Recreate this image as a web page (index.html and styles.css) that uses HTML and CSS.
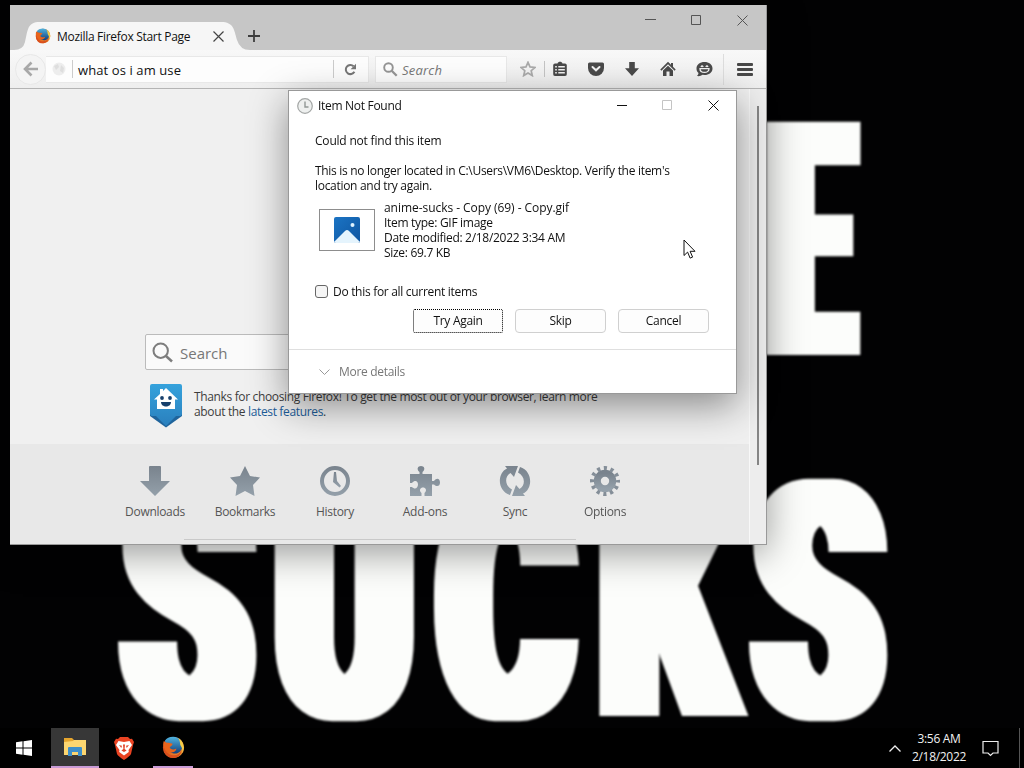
FILE: index.html
```html
<!DOCTYPE html>
<html lang="en">
<head>
    <meta charset="UTF-8">
    <meta name="viewport" content="width=device-width, initial-scale=1.0">
    <title>Desktop</title>
    <link rel="stylesheet" href="styles.css">
</head>
<body>
    <!-- Shared icons -->
    <svg class="defs" width="0" height="0">
        <defs>
            <linearGradient id="fox" x1="0" y1="0" x2="1" y2="1">
                <stop offset="0" stop-color="#d8401c"/>
                <stop offset=".5" stop-color="#e8641c"/>
                <stop offset="1" stop-color="#e9a03a"/>
            </linearGradient>
            <linearGradient id="globe" x1="0" y1="0" x2="0" y2="1">
                <stop offset="0" stop-color="#4fb3df"/>
                <stop offset="1" stop-color="#123f7c"/>
            </linearGradient>
            <linearGradient id="pin" x1="0" y1="0" x2="0" y2="1">
                <stop offset="0" stop-color="#35a2dc"/>
                <stop offset="1" stop-color="#2a7fbd"/>
            </linearGradient>
            <linearGradient id="photo" x1="0" y1="0" x2="1" y2="1">
                <stop offset="0" stop-color="#1b74c4"/>
                <stop offset="1" stop-color="#0f55a0"/>
            </linearGradient>
            <linearGradient id="steel" x1="0" y1="0" x2="0" y2="1">
                <stop offset="0" stop-color="#79838d"/>
                <stop offset="1" stop-color="#94a0aa"/>
            </linearGradient>
            <symbol id="firefox" viewBox="0 0 24 24">
                <circle cx="12" cy="12" r="11" fill="url(#fox)"/>
                <path d="M3 5C6 0 16-1 20 5c3 5 1 11-4 13-4 1-9-1-10-5z" fill="url(#globe)"/>
                <path d="M17 2c5 3 8 10 4 16 1-5-1-7-2-9 0-3-1-5-2-7z" fill="#f5cc48"/>
                <path d="M2 5c1 2 3 2 5 2l4 1c0 2-2 2-3 4 2 3 5 2 7 1 0 3-4 5-8 4C2 15 0 10 2 5z" fill="#e8641c"/>
                <path d="M2 10c0 6 5 10 10 10 4 0 7-2 8-5 0 5-4 8-9 8C5 23 0 17 2 10z" fill="#d9501d"/>
            </symbol>
        </defs>
    </svg>

    <div class="desktop">
        <svg class="wallpaper" viewBox="0 0 1024 768">
            <filter id="heavy" x="0" y="0" width="1024" height="768" filterUnits="userSpaceOnUse">
                <feMorphology operator="dilate" radius="12 0"/>
                <feGaussianBlur stdDeviation=".9"/>
            </filter>
            <g filter="url(#heavy)">
                <text transform="translate(770.6 355) scale(1.43 3.28)">E</text>
                <text transform="translate(123.700 718) scale(2.04 3.32)">S</text>
                <text transform="translate(276 718) scale(2.06 3.28)">U</text>
                <text transform="translate(439 718) scale(2.03 3.28)">C</text>
                <text transform="translate(600 716) scale(2.1 3.28)">K</text>
                <text transform="translate(754.600 718) scale(2.04 3.32)">S</text>
            </g>
        </svg>

        <!-- Browser window -->
        <div class="browser">
            <div class="titlebar">
                <div class="tab">
                    <svg class="tab-shape" width="240" height="28" viewBox="0 0 240 28">
                        <path d="M0 28Q9 28 11 20C14 8 13 0 26 0H207C220 0 220 8 223 18Q226 28 236 28z" fill="#f6f6f6"/>
                    </svg>
                    <svg class="tab-icon" width="16" height="16"><use href="#firefox"/></svg>
                    <span class="tab-title">Mozilla Firefox Start Page</span>
                    <svg class="tab-close" width="11" height="11" viewBox="0 0 11 11"><path d="M.5.5l10 10M10.5.5l-10 10" stroke="#444" stroke-width="1.2"/></svg>
                </div>
                <svg class="new-tab" width="12" height="12" viewBox="0 0 12 12"><path d="M6 0v12M0 6h12" stroke="#3d3d3d" stroke-width="1.8"/></svg>
                <div class="controls">
                    <svg width="11" height="11" viewBox="0 0 11 11"><path d="M0 4.500h11"/></svg>
                    <svg width="11" height="11" viewBox="0 0 11 11"><path d="M.5.5h9v9h-9z"/></svg>
                    <svg width="11" height="11" viewBox="0 0 11 11"><path d="M.5.5l10 10M10.5.5l-10 10"/></svg>
                </div>
            </div>

            <div class="toolbar">
                <div class="back">
                    <svg width="16" height="16" viewBox="0 0 16 16"><path d="M8.500 1.500L2 8l6.500 6.500M2.500 8H15" fill="none" stroke="#a8a8a8" stroke-width="2.600"/></svg>
                </div>
                <div class="urlbar">
                    <svg class="site" width="14" height="14" viewBox="0 0 14 14"><circle cx="7" cy="7" r="6.500" fill="#ededed"/><path d="M2 4l4-2 1 3-3 3zM9 3l3 3-1 5-3-2z" fill="#dedede"/></svg>
                    <span class="url">what os i am use</span>
                    <div class="reload">
                        <svg width="13" height="13" viewBox="0 0 13 13"><path d="M10.400 8.800A4.600 4.600 0 1 1 9.600 3.200" fill="none" stroke="#777" stroke-width="2"/><path d="M12 .8v5.400H6.600z" fill="#777"/></svg>
                    </div>
                </div>
                <div class="searchbar">
                    <svg width="15" height="15" viewBox="0 0 15 15"><circle cx="5.500" cy="5.500" r="4.300" fill="none" stroke="#959595" stroke-width="1.900"/><path d="M8.700 8.700l5 5" stroke="#959595" stroke-width="2.300"/></svg>
                    <span>Search</span>
                </div>
                <div class="tools">
                    <svg width="16" height="16" viewBox="0 0 16 16"><path d="M8 1.300l2 4.600 5 .5-3.800 3.300 1.100 4.900L8 12l-4.300 2.600 1.100-4.900L1 6.400l5-.5z" fill="none" stroke="#aaa" stroke-width="1.700"/></svg>
                    <div class="clip">
                        <svg width="16" height="16" viewBox="0 0 16 16"><path d="M3 2.500h2.500C6 .3 10 .3 10.500 2.500H13A1.800 1.800 0 0 1 14.800 4v9A1.800 1.800 0 0 1 13 15H3a1.800 1.800 0 0 1-1.800-2V4A1.800 1.800 0 0 1 3 2.500z" fill="#4a4a4a"/><path d="M3.200 5.700h1.600M6.300 5.700h6.500M3.200 8.700h1.600M6.300 8.700h6.500M3.200 11.700h1.600M6.300 11.700h6.500" stroke="#f2f2f2" stroke-width="1.500"/></svg>
                    </div>
                    <svg width="16" height="16" viewBox="0 0 16 16"><path d="M1.500 1.500h13q1.500 0 1.500 1.500v4a8 8 0 0 1-16 0V3q0-1.500 1.500-1.500z" fill="#4a4a4a"/><path d="M4.500 6L8 9.300 11.500 6" fill="none" stroke="#f2f2f2" stroke-width="2" stroke-linecap="round"/></svg>
                    <svg width="16" height="16" viewBox="0 0 16 16"><path d="M5.200 1h5.600v6.200H15L8 15 1 7.200h4.200z" fill="#4a4a4a"/></svg>
                    <svg width="16" height="16" viewBox="0 0 16 16"><path d="M8 .8l3 3V2h2v3.800l2.700 2.800-1.100 1.100L8 3.300 1.400 9.700.3 8.600z" fill="#4a4a4a"/><path d="M8 4.700l5 4.900V15H9.500v-4.500h-3V15H3V9.600z" fill="#4a4a4a"/></svg>
                    <svg width="17" height="16" viewBox="0 0 17 16"><path d="M8.500 1C13 1 16.500 3.600 16.500 7.500S13 14 8.500 14l-2-.2C5 15 3 15.400 1 15c1-1 1.500-2 1.500-3C1 10.700.5 9.500.5 7.500.5 3.600 4 1 8.500 1z" fill="#4a4a4a"/><path d="M4 7.700h9c0 5-9 5-9 0zM5 6q1-2 2.200 0M9.800 6Q11 4 12 6" fill="none" stroke="#f2f2f2" stroke-width="1.300"/></svg>
                </div>
                <div class="menu"><i></i><i></i><i></i></div>
            </div>

            <div class="viewport">
                <div class="page">
                    <div class="page-search">
                        <svg width="21" height="21" viewBox="0 0 21 21"><circle cx="8.700" cy="8.700" r="7.200" fill="none" stroke="#7d7d7d" stroke-width="2"/><path d="M14 14l6 5.500" stroke="#7d7d7d" stroke-width="2.500"/></svg>
                        <span>Search</span>
                    </div>
                    <div class="snippet">
                        <svg width="32" height="44" viewBox="0 0 32 44">
                            <path d="M0 29h32v3L16 43.500 0 32z" fill="#1f649c"/>
                            <path d="M2 0h28q2 0 2 2v28q0 2-2 2h-4L16 42 6 32H2q-2 0-2-2V2q0-2 2-2z" fill="url(#pin)"/>
                            <path d="M16 4l12 11.500h-3V25H7v-9.500H4L10 10V5h3v2z" fill="#fff"/>
                            <circle cx="12" cy="14" r="1.900" fill="#17406c"/><circle cx="20" cy="14" r="1.900" fill="#17406c"/>
                            <path d="M11 18h10c0 6-10 6-10 0z" fill="#17406c"/>
                        </svg>
                        <p>Thanks for choosing Firefox! To get the most out of your browser, learn more<br>about the <a>latest features</a>.</p>
                    </div>
                    <div class="launcher">
                        <div class="launch">
                            <svg width="32" height="32" viewBox="0 0 32 32"><path d="M11 1h10q1 0 1 1v14h9L16 31 1 16h9V2q0-1 1-1z"/></svg>
                            <span>Downloads</span>
                        </div>
                        <div class="launch">
                            <svg width="32" height="32" viewBox="0 0 32 32"><path d="M16 1l5 10 10 1.500-7 7.500 1.500 11L16 26l-9.500 5L8 20l-7-7.500L11 11z"/></svg>
                            <span>Bookmarks</span>
                        </div>
                        <div class="launch">
                            <svg width="32" height="32" viewBox="0 0 32 32"><path fill-rule="evenodd" d="M16 1a15 15 0 1 1 0 30 15 15 0 0 1 0-30zm0 4a11 11 0 1 0 0 22 11 11 0 0 0 0-22z"/><path d="M15 7h2l1 9 4 5-1.500 1.500L14 17z"/></svg>
                            <span>History</span>
                        </div>
                        <div class="launch">
                            <svg width="32" height="32" viewBox="0 0 32 32"><path d="M1 9h9.500V7C7 4 9 1 12 1s5 3 1.500 6v2H23v7h2c3-4 6-2 6 1.500s-3 5-6 2h-2V31h-7.500v-3c3-3 1-5.500-1.500-5.500s-4.500 2.500-1.500 5.500v3H1v-9h2c3 3 6 1 6-2.500s-3-5-6-1.500H1z"/></svg>
                            <span>Add-ons</span>
                        </div>
                        <div class="launch">
                            <svg width="32" height="32" viewBox="0 0 32 32"><path d="M6 1h13l-4 11-3.500-4C5 12 6 21 13 24.500L11 30C-2 26-2 8 8 3.500zM26 31H13l4-11 3.500 4C27 20 26 11 19 7.500L21 2c13 4 13 22 3 26.500z"/></svg>
                            <span>Sync</span>
                        </div>
                        <div class="launch">
                            <svg width="32" height="32" viewBox="0 0 32 32"><circle cx="16" cy="16" r="7.700" fill="none" stroke="url(#steel)" stroke-width="7"/><circle cx="16" cy="16" r="13" fill="none" stroke="#848e98" stroke-width="4" stroke-dasharray="3.200 3.607" stroke-dashoffset="1.600"/></svg>
                            <span>Options</span>
                        </div>
                    </div>
                    <div class="divider"></div>
                </div>
                <div class="scrollbar"><div class="thumb"></div></div>
            </div>
        </div>

        <!-- File operation dialog -->
        <div class="dialog">
            <div class="dialog-title">
                <svg width="16" height="16" viewBox="0 0 16 16"><circle cx="8" cy="8" r="7.300" fill="#eef0ef" stroke="#a3a6a5" stroke-width="1.200"/><path d="M8 3.500V9h3.500" fill="none" stroke="#929896" stroke-width="1.400"/></svg>
                <span>Item Not Found</span>
                <div class="controls">
                    <svg width="11" height="11" viewBox="0 0 11 11"><path d="M1 5.500h10"/></svg>
                    <svg class="off" width="11" height="11" viewBox="0 0 11 11"><path d="M.5.5h9v9h-9z"/></svg>
                    <svg width="11" height="11" viewBox="0 0 11 11"><path d="M.5.5l10 10M10.500.5l-10 10"/></svg>
                </div>
            </div>
            <div class="dialog-body">
                <p class="heading">Could not find this item</p>
                <p class="message">This is no longer located in C:\Users\VM6\Desktop. Verify the item's<br>location and try again.</p>
                <div class="file">
                    <div class="thumbnail">
                        <svg width="26" height="26" viewBox="0 0 26 26"><rect width="26" height="26" rx="2" fill="url(#photo)"/><path d="M0 25L11 14q2-2 4 0l11 11q-1 1-2 1H2q-1 0-2-1z" fill="#e5f4fd"/><circle cx="18.500" cy="8" r="2" fill="#dff3ff"/></svg>
                    </div>
                    <div class="info">
                        <div class="filename">anime-sucks - Copy (69) - Copy.gif</div>
                        <div>Item type: GIF image</div>
                        <div>Date modified: 2/18/2022 3:34 AM</div>
                        <div>Size: 69.7 KB</div>
                    </div>
                </div>
                <label class="check"><span class="box"></span>Do this for all current items</label>
                <div class="buttons">
                    <button class="focused">Try Again</button>
                    <button>Skip</button>
                    <button>Cancel</button>
                </div>
            </div>
            <div class="details">
                <svg width="11" height="6" viewBox="0 0 11 6"><path d="M.5.5l5 5 5-5" fill="none" stroke="#999"/></svg>
                <span>More details</span>
            </div>
        </div>

        <svg class="cursor" width="13" height="21" viewBox="0 0 13 21"><path d="M1 1v15.500l3.600-3.400 2.500 6 2.500-1-2.500-5.800H12z" fill="#fff" stroke="#111"/></svg>

        <div class="taskbar">
            <div class="task start">
                <svg width="16" height="16" viewBox="0 0 16 16"><path d="M0 2.300L6.500 1.300v6.200H0zM7.500 1.200L16 0v7.500H7.500zM0 8.500h6.500v6.200L0 13.700zM7.500 8.500H16V16l-8.500-1.200z" fill="#fff"/></svg>
            </div>
            <div class="task active">
                <svg width="22" height="18" viewBox="0 0 22 18"><path d="M0 0h8l2 2h12v15H0z" fill="#e5a52e"/><path d="M0 4l9-1 1-1h12v15H0z" fill="#fcd670"/><path d="M4 10q0-1 1-1h12q1 0 1 1v8h-4v-4H8v4H4z" fill="#3e8fc9"/></svg>
            </div>
            <div class="task brave">
                <svg width="20" height="23" viewBox="0 0 20 23"><path d="M6 0h8l2 2 2-.3 2 3.300-1 3-2 9q-1 2-7 6-6-4-7-6L1 8 0 5l2-3.300L4 2z" fill="#ea4322"/><path d="M4.500 4L10 5l5.500-1L18 8l-3.500 5 .3 2L10 18.500 5.200 15l.3-2L2 8z" fill="#fff"/><path d="M5 8l3 .8L7.300 11zM15 8l-3 .8.7 2.200zM9 7.500h2l-.4 4.500 2 1.500L10 15l-2.600-1.500 2-1.500z" fill="#e2452a"/></svg>
            </div>
            <div class="task open">
                <svg width="23" height="23"><use href="#firefox"/></svg>
            </div>
            <div class="tray">
                <svg width="12" height="7" viewBox="0 0 12 7"><path d="M.5 6.500L6 1l5.500 5.500" fill="none" stroke="#eee" stroke-width="1.300"/></svg>
                <div class="clock">
                    <div>3:56 AM</div>
                    <div>2/18/2022</div>
                </div>
                <svg class="notify" width="17" height="17" viewBox="0 0 17 17"><path d="M1 1.500h15v11.500h-5L8.500 15.500 6 13H1z" fill="none" stroke="#eee" stroke-width="1.200"/></svg>
                <div class="peek"></div>
            </div>
        </div>
    </div>
</body>
</html>
```
FILE: styles.css
```css
* {
    box-sizing: border-box;
}

body {
    margin: 0;
    font-family: "Open Sans", "Noto Sans", sans-serif;
    font-size: 12px;
    letter-spacing: -0.3px;
    color: #111;
}

p {
    margin: 0;
}

svg {
    display: block;
    flex: none;
}

.defs {
    position: absolute;
}

.desktop {
    position: relative;
    width: 1024px;
    height: 768px;
    overflow: hidden;
    background: #020203;
}

.wallpaper {
    position: absolute;
    left: 0;
    top: 0;
    width: 1024px;
    height: 768px;
}

.wallpaper text {
    font-family: Roboto, sans-serif;
    font-size: 100px;
    font-weight: 900;
    letter-spacing: 0;
    fill: #fcfdfb;
}

/* Browser */
.browser {
    position: absolute;
    left: 10px;
    top: 5px;
    width: 757px;
    height: 540px;
    display: flex;
    flex-direction: column;
    border-right: 1px solid #999;
    border-bottom: 1px solid #999;
    background: #f0f0f0;
    box-shadow: 0 8px 36px rgba(0, 0, 0, 0.4);
}

.titlebar {
    display: flex;
    height: 45px;
    background: #c6c6c6;
}

.tab {
    position: relative;
    display: flex;
    align-items: center;
    width: 238px;
    height: 28px;
    margin-top: 17px;
    padding-left: 25px;
}

.tab-shape {
    position: absolute;
    left: 4px;
    top: 0;
}

.tab-icon,
.tab-title,
.tab-close {
    position: relative;
}

.tab-title {
    width: 156px;
    margin-left: 6px;
}

.new-tab {
    margin-top: 25px;
}

.controls {
    display: flex;
    gap: 35px;
    margin-left: auto;
    stroke: #555;
    fill: none;
}

.titlebar .controls {
    margin-top: 10px;
    margin-right: 18px;
}

.toolbar {
    display: flex;
    align-items: center;
    height: 39px;
    border-bottom: 1px solid #b4b4b4;
    background: linear-gradient(#f8f8f8, #eee);
}

.back {
    display: flex;
    align-items: center;
    justify-content: center;
    width: 31px;
    height: 31px;
    margin-left: 5px;
    border: 1px solid #e8e8e8;
    border-radius: 50%;
    background: #f4f4f4;
}

.urlbar {
    display: flex;
    align-items: center;
    width: 323px;
    height: 27px;
    padding-left: 6px;
    border: 1px solid #e8e8e8;
    border-left: 0;
    background: #fdfdfd;
}

.url {
    flex: 1;
    height: 18px;
    margin-left: 6px;
    padding-left: 5px;
    border-left: 1px solid #ccc;
    font-size: 13px;
    line-height: 20px;
    letter-spacing: 0.1px;
}

.reload {
    display: flex;
    align-items: center;
    justify-content: center;
    width: 35px;
    height: 18px;
    padding-right: 2px;
    border-left: 1px solid #ccc;
}

.searchbar {
    display: flex;
    align-items: center;
    gap: 4px;
    width: 132px;
    height: 27px;
    margin-left: 6px;
    padding-left: 7px;
    border: 1px solid #e8e8e8;
    background: #fdfdfd;
    color: #777;
    font-size: 13px;
    font-style: italic;
    letter-spacing: 0.2px;
}

.searchbar span {
    padding-top: 2px;
}

.tools {
    display: flex;
    gap: 20px;
    margin-left: 13px;
}

.tools .clip {
    margin-left: -12px;
    padding-left: 7px;
    border-left: 1px solid #c4c4c4;
}

.menu {
    display: flex;
    flex-direction: column;
    justify-content: center;
    gap: 2px;
    height: 31px;
    margin-left: auto;
    padding: 0 13px;
    border-left: 1px solid #ddd;
}

.menu i {
    width: 16px;
    height: 3px;
    border-radius: 1px;
    background: #484848;
}

.viewport {
    display: flex;
    flex: 1;
}

.page {
    display: flex;
    flex: 1;
    flex-direction: column;
    background: #f0f0f0;
}

.page-search {
    display: flex;
    align-items: center;
    gap: 7px;
    width: 460px;
    height: 36px;
    margin: 245px 0 0 135px;
    padding-left: 6px;
    border: 1px solid #bbb;
    border-radius: 2px;
    background: #fafafa;
    color: #777;
    font-size: 15px;
    letter-spacing: 0;
}

.page-search span {
    padding-top: 2px;
}

.snippet {
    display: flex;
    gap: 12px;
    margin: 14px 0 0 140px;
}

.snippet p {
    margin-top: 5px;
    line-height: 15px;
    letter-spacing: -0.35px;
    color: #3d3d3d;
    white-space: nowrap;
}

.snippet a {
    color: #1c5d99;
}

.launcher {
    display: flex;
    flex: 1;
    margin-top: 16px;
    padding: 21px 0 0 100px;
    background: #e8e8e8;
}

.launch {
    display: flex;
    flex-direction: column;
    align-items: center;
    width: 90px;
    gap: 6px;
    color: #555;
    fill: url(#steel);
}

.divider {
    height: 5px;
    padding-left: 174px;
    background: #e8e8e8;
}

.divider::before {
    content: "";
    display: block;
    width: 392px;
    height: 1px;
    background: #c9c9c9;
}

.scrollbar {
    width: 17px;
    padding: 17px 0 0 7px;
    border-left: 1px solid #f8f8f8;
    background: #ededed;
}

.thumb {
    width: 2px;
    height: 359px;
    background: #858585;
}

/* Dialog */
.dialog {
    position: absolute;
    left: 288px;
    top: 90px;
    width: 449px;
    height: 304px;
    display: flex;
    flex-direction: column;
    border: 1px solid #999;
    background: #fff;
    box-shadow: 0 12px 36px rgba(0, 0, 0, 0.42);
}

.dialog-title {
    display: flex;
    align-items: center;
    gap: 5px;
    height: 29px;
    padding: 0 17px 0 8px;
}

.dialog .controls {
    stroke: #111;
}

.dialog .off {
    stroke: #c4c4c4;
}

.dialog-body {
    height: 229px;
    padding: 13px 27px 0 26px;
    line-height: 15px;
}

.heading {
    letter-spacing: -0.2px;
}

.message {
    margin-top: 15px;
    white-space: nowrap;
}

.file {
    display: flex;
    align-items: center;
    gap: 9px;
    margin: 7px 0 0 4px;
}

.thumbnail {
    display: flex;
    align-items: center;
    justify-content: center;
    width: 56px;
    height: 42px;
    border: 1px solid #8d8d8d;
}

.filename {
    letter-spacing: -0.05px;
}

.check {
    display: flex;
    align-items: center;
    gap: 5px;
    margin-top: 24px;
}

.box {
    width: 13px;
    height: 13px;
    border: 1px solid #666;
    border-radius: 3px;
    background: #f5f5f5;
}

.buttons {
    display: flex;
    justify-content: flex-end;
    gap: 12px;
    margin-top: 10px;
}

button {
    width: 91px;
    height: 24px;
    padding: 0;
    border: 1px solid #d0d0d0;
    border-radius: 4px;
    background: #fdfdfd;
    color: #111;
    font: inherit;
    line-height: 22px;
    letter-spacing: inherit;
}

button.focused {
    width: 90px;
    border: 1px dotted #000;
    border-radius: 2px;
}

.details {
    display: flex;
    flex: 1;
    align-items: center;
    gap: 9px;
    padding-left: 30px;
    border-top: 1px solid #dfdfdf;
    color: #777;
}

.cursor {
    position: absolute;
    left: 683px;
    top: 239px;
}

/* Taskbar */
.taskbar {
    position: absolute;
    left: 0;
    bottom: 0;
    display: flex;
    width: 1024px;
    height: 40px;
    background: #000;
    color: #f2f2f2;
}

.task {
    display: flex;
    align-items: center;
    justify-content: center;
    width: 48px;
}

.start {
    width: 51px;
    padding-right: 3px;
}

.active {
    border-bottom: 2px solid #c99bd6;
    background: #373737;
}

.brave {
    width: 50px;
}

.open {
    width: 40px;
    margin-left: 4px;
    border-bottom: 2px solid #c99bd6;
}

.tray {
    display: flex;
    align-items: center;
    margin-left: auto;
}

.clock {
    width: 76px;
    line-height: 18px;
    text-align: center;
}

.notify {
    margin-left: 5px;
}

.peek {
    width: 5px;
    height: 40px;
    margin-left: 20px;
    border-left: 1px solid #555;
}
```
